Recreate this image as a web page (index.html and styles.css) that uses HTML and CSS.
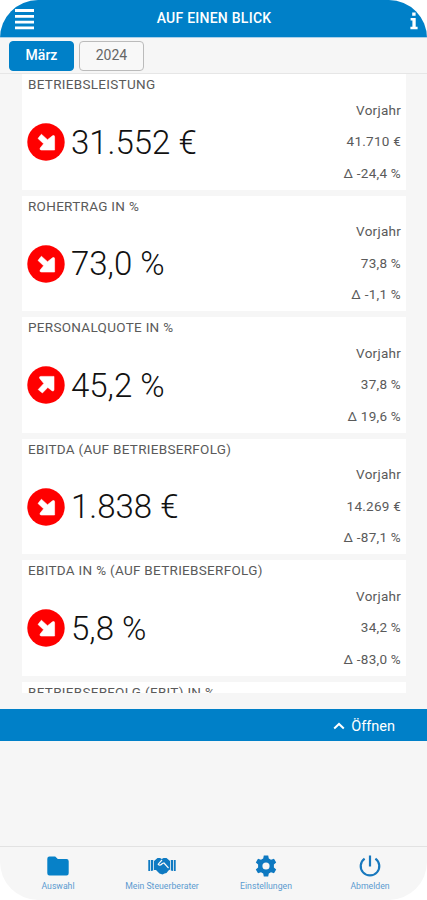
FILE: index.html
```html
<!DOCTYPE html>
<html lang="de">
<head>
    <meta charset="UTF-8">
    <meta name="viewport" content="width=device-width, initial-scale=1.0">
    <title>Auf einen Blick</title>
    <link rel="stylesheet" href="styles.css">
</head>
<body>
    <!-- Shared arrow symbol, rotated for rising values -->
    <svg class="symbols" width="0" height="0">
        <symbol id="arrow" viewBox="0 0 38 38">
            <circle cx="19" cy="19" r="18.7" fill="#f00"/>
            <path d="M14.4 11.2 L20.5 16.8 L25.5 12.8 Q27.6 11.8 27.6 13.8 V27 H14.4 Q12.2 26.8 13.2 25 L16.6 20.8 L11 15.4 Z" fill="#fff" stroke="#fff" stroke-width="0.6" stroke-linejoin="round"/>
        </symbol>
    </svg>

    <div class="app">
        <header class="header">
            <svg class="menu-icon" width="19" height="21" viewBox="0 0 19 21">
                <path d="M0 1.5H19M0 7.3H19M0 13.1H19M0 18.9H19" stroke="#fff" stroke-width="2.8"/>
            </svg>
            <h1>AUF EINEN BLICK</h1>
            <svg class="info-icon" width="8" height="18" viewBox="0 0 8 18">
                <path d="M2.2 0.5H5.6V3.8H2.2ZM0.6 6H5.7V14.7H7.6V17.2H0.4V14.7H2.4V8.4H0.6Z" fill="#fff"/>
            </svg>
        </header>

        <div class="filters">
            <button class="filter active">März</button>
            <button class="filter">2024</button>
        </div>

        <main class="list">
            <section class="card">
                <h2>BETRIEBSLEISTUNG</h2>
                <div class="value"><svg class="arrow"><use href="#arrow"/></svg><span>31.552 €</span></div>
                <div class="compare"><span>Vorjahr</span><span>41.710 €</span><span>Δ -24,4 %</span></div>
            </section>
            <section class="card">
                <h2>ROHERTRAG IN %</h2>
                <div class="value"><svg class="arrow"><use href="#arrow"/></svg><span>73,0 %</span></div>
                <div class="compare"><span>Vorjahr</span><span>73,8 %</span><span>Δ -1,1 %</span></div>
            </section>
            <section class="card">
                <h2>PERSONALQUOTE IN %</h2>
                <div class="value"><svg class="arrow up"><use href="#arrow"/></svg><span>45,2 %</span></div>
                <div class="compare"><span>Vorjahr</span><span>37,8 %</span><span>Δ 19,6 %</span></div>
            </section>
            <section class="card">
                <h2>EBITDA (AUF BETRIEBSERFOLG)</h2>
                <div class="value"><svg class="arrow"><use href="#arrow"/></svg><span>1.838 €</span></div>
                <div class="compare"><span>Vorjahr</span><span>14.269 €</span><span>Δ -87,1 %</span></div>
            </section>
            <section class="card">
                <h2>EBITDA IN % (AUF BETRIEBSERFOLG)</h2>
                <div class="value"><svg class="arrow"><use href="#arrow"/></svg><span>5,8 %</span></div>
                <div class="compare"><span>Vorjahr</span><span>34,2 %</span><span>Δ -83,0 %</span></div>
            </section>
            <section class="card">
                <h2>BETRIEBSERFOLG (EBIT) IN %</h2>
            </section>
        </main>

        <div class="open-bar">
            <svg width="12" height="8" viewBox="0 0 12 8">
                <path d="M1.2 6.4L6 1.9L10.8 6.4" fill="none" stroke="#fff" stroke-width="2"/>
            </svg>
            <span>Öffnen</span>
        </div>

        <div class="panel"></div>

        <nav class="tabs">
            <a class="tab">
                <svg width="22" height="20" viewBox="0 0 22 20">
                    <path d="M2.5 0.5H8.2L10.8 3H19.5Q21.7 3 21.7 5.2V17.3Q21.7 19.5 19.5 19.5H2.5Q0.3 19.5 0.3 17.3V2.7Q0.3 0.5 2.5 0.5Z" fill="#0781c8"/>
                </svg>
                <span>Auswahl</span>
            </a>
            <a class="tab">
                <svg width="28" height="20" viewBox="0 0 28 20">
                    <g fill="#0f7ac2">
                        <path d="M0.3 4H2.2V15H0.3ZM3 4H5.2V14.5L3 15ZM22.8 4H25V15L22.8 14.5ZM25.8 4H27.7V15H25.8Z"/>
                        <path d="M6 5L9.5 2H12L13.8 3L15.5 2H18.5L22 5V13.5L20.5 14.5L18.5 17L16.5 17.5L14.5 18.5L11.5 17.5L8 14H6Z"/>
                    </g>
                    <path d="M14 4L10.2 8.2Q11.7 10.5 14.4 7.5L16 7L20.5 12" fill="none" stroke="#f7f7f7" stroke-width="1.2"/>
                </svg>
                <span>Mein Steuerberater</span>
            </a>
            <a class="tab">
                <svg width="22" height="22" viewBox="0 0 22 22">
                    <path fill-rule="evenodd" d="M8.8 0.5H13.2L13.8 3.5L16 4.8L19 3.8L21.2 7.5L18.9 9.6V12.4L21.2 14.5L19 18.2L16 17.2L13.8 18.5L13.2 21.5H8.8L8.2 18.5L6 17.2L3 18.2L0.8 14.5L3.1 12.4V9.6L0.8 7.5L3 3.8L6 4.8L8.2 3.5ZM11 7.4A3.6 3.6 0 1 0 11 14.6A3.6 3.6 0 1 0 11 7.4Z" fill="#0e79c1"/>
                </svg>
                <span>Einstellungen</span>
            </a>
            <a class="tab">
                <svg width="22" height="22" viewBox="0 0 22 22">
                    <path d="M5.6 3.6A9.3 9.3 0 1 0 16.4 3.6M11 0.5V11.5" fill="none" stroke="#1878bd" stroke-width="2.2"/>
                </svg>
                <span>Abmelden</span>
            </a>
        </nav>
    </div>
</body>
</html>
```
FILE: styles.css
```css
* {
    box-sizing: border-box;
}

body {
    margin: 0;
    background-color: #fff;
    font-family: Roboto, "Liberation Sans", sans-serif;
}

.symbols {
    position: absolute;
}

.app {
    display: flex;
    flex-direction: column;
    width: 427px;
    height: 900px;
    overflow: hidden;
    border-radius: 38px;
    background-color: #f6f6f6;
}

.header {
    display: grid;
    grid-template-columns: 20px 1fr 20px;
    align-items: center;
    flex: none;
    height: 38px;
    padding: 1px 9px 0 15px;
    border-bottom: 1px solid #a9d0ea;
    background-color: #0080c8;
    background-clip: padding-box;
    color: #fff;
}

.header h1 {
    margin: 0 5px 2px 0;
    font-size: 14px;
    font-weight: 500;
    letter-spacing: 0.25px;
    text-align: center;
}

.info-icon {
    margin-top: 3px;
    justify-self: end;
}

.filters {
    display: flex;
    gap: 5px;
    flex: none;
    height: 36px;
    padding: 3px 9px;
    border-bottom: 1px solid #e6e6e6;
}

.filter {
    width: 65px;
    height: 30px;
    padding: 0 0 2px;
    border: 1px solid #bbb;
    border-radius: 4px;
    background-color: #f8f8f8;
    color: #666;
    font-family: inherit;
    font-size: 14px;
}

.filter.active {
    border-color: #0080c8;
    background-color: #0080c8;
    color: #fff;
    font-weight: 500;
}

.list {
    display: flex;
    flex-direction: column;
    gap: 6px;
    flex: none;
    height: 619px;
    padding: 0 21px 0 22px;
    overflow: hidden;
}

.card {
    display: grid;
    grid-template-columns: 1fr auto;
    grid-template-rows: 20px 1fr;
    flex: none;
    height: 115.6px;
    padding: 0 5px;
    background-color: #fff;
}

.card h2 {
    grid-column: 1 / 3;
    margin: 0 1px;
    font-size: 13.5px;
    font-weight: 400;
    line-height: 21px;
    letter-spacing: 0.3px;
    color: #5a5a5a;
}

.value {
    display: flex;
    align-items: center;
    gap: 6px;
    height: 96px;
    color: #111;
    font-size: 33px;
    font-weight: 300;
}

.arrow {
    width: 38px;
    height: 38px;
}

.arrow.up {
    transform: rotate(-90deg);
}

.compare {
    display: flex;
    flex-direction: column;
    padding-top: 0.5px;
    text-align: right;
    color: #5a5a5a;
    font-size: 13.5px;
    line-height: 31.6px;
    letter-spacing: 0.25px;
}

.open-bar {
    display: flex;
    align-items: center;
    justify-content: flex-end;
    gap: 6px;
    flex: none;
    height: 32px;
    margin-top: 16px;
    padding: 2px 32px 0 0;
    background-color: #0080c8;
    color: #fff;
    font-size: 14.5px;
}

.panel {
    flex: 1;
}

.tabs {
    display: flex;
    justify-content: space-between;
    flex: none;
    height: 54px;
    padding: 0 5px 0 6px;
    border-top: 1px solid #e2e2e2;
}

.tab {
    display: flex;
    flex-direction: column;
    align-items: center;
    width: 104px;
    padding-top: 8px;
    color: #5c9bd0;
    font-size: 8.7px;
}

.tab svg {
    height: 22px;
    margin-bottom: 4px;
}
```
